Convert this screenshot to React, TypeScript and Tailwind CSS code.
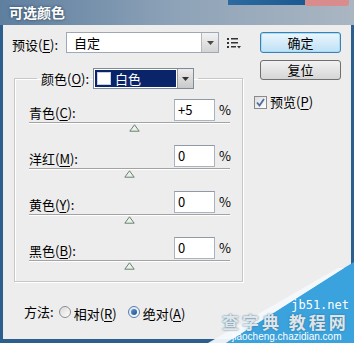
import React from "react";

const font = { fontFamily: '"Noto Sans CJK SC", "Noto Sans", sans-serif' };

function U({ pre, u, post }: { pre: string; u: string; post: string }) {
  return (
    <span className="text-[13px] leading-[18px] whitespace-nowrap">
      {pre}
      <span className="underline underline-offset-2">{u}</span>
      {post}
    </span>
  );
}

function Thumb({ cls }: { cls: string }) {
  return (
    <svg width="11" height="8" viewBox="0 0 11 8" className={cls}>
      <path d="M5.5 0.8 L10.2 7.2 L0.8 7.2 Z" fill="#e8f3e8" stroke="#6f7f72" strokeWidth="1" />
    </svg>
  );
}

function Row({ name, u, value, thumb }: { name: string; u: string; value: string; thumb: string }) {
  return (
    <div className="flex flex-col h-[46px]">
      <div className="flex items-center h-[22px]">
        <div className="w-[145px] pt-[1px]">
          <U pre={name + "("} u={u} post="):" />
        </div>
        <div className="w-[41px] h-[22px] bg-white border border-[#a9b4bf] border-t-[#8f9aa6] text-[13px] leading-[20px] pl-[3px]">
          {value}
        </div>
        <span className="ml-[4px] text-[13px] leading-[18px]">%</span>
      </div>
      <div className="mt-[1px] w-[201px] h-[2px] bg-[#a3a3a3] border-b border-white" />
      <Thumb cls={thumb} />
    </div>
  );
}

export default function App() {
  return (
    <div className="relative w-[354px] h-[343px] overflow-hidden bg-[#2d5f8e] flex flex-col" style={font}>
      {/* title bar */}
      <div className="h-[25px] shrink-0 bg-gradient-to-r from-[#5f7f9f] via-[#8ea3b8] to-[#aab6c2] flex flex-col">
        <div className="flex h-[5px]">
          <div className="w-[228px]" />
          <div className="w-[77px] bg-gradient-to-r from-[#2c6aa0] to-[#1b5a90]" />
          <div className="w-[44px] h-[6px] bg-[#d98c8c] rounded-b-[3px]" />
        </div>
        <div className="pl-[9px] -mt-[2px] text-[14px] leading-[18px] font-bold text-white [text-shadow:0_0_3px_#2a3d52]">
          可选颜色
        </div>
      </div>

      {/* body */}
      <div className="ml-[3px] w-[348px] h-[314px] bg-[#ededed] text-black flex flex-col pl-[9px] pt-[7px]">
        <div className="flex">
          {/* left column */}
          <div className="w-[231px] flex flex-col">
            <div className="flex items-center h-[21px]">
              <div className="w-[54px]">
                <U pre="预设(" u="E" post="):" />
              </div>
              <div className="w-[153px] h-[21px] bg-white border border-[#9fa9b4] flex">
                <div className="flex-1 text-[13px] leading-[19px] pl-[7px]">自定</div>
                <div className="w-[17px] h-[19px] bg-gradient-to-b from-[#f2f2f2] to-[#d4d4d4] border-l border-[#b8b8b8] flex items-center justify-center">
                  <svg width="7" height="4" viewBox="0 0 7 4"><path d="M0 0 H7 L3.5 4 Z" fill="#4a4a4a" /></svg>
                </div>
              </div>
              <svg width="14" height="11" viewBox="0 0 14 11" className="ml-[8px] mt-[2px]">
                <rect x="0" y="0" width="2" height="2" fill="#333" />
                <rect x="4" y="0" width="7" height="1.5" fill="#333" />
                <rect x="0" y="4" width="2" height="2" fill="#333" />
                <rect x="4" y="4" width="7" height="1.5" fill="#333" />
                <rect x="0" y="8" width="2" height="2" fill="#333" />
                <rect x="4" y="8" width="5" height="1.5" fill="#333" />
                <path d="M10 8 H14 L12 10.5 Z" fill="#333" />
              </svg>
            </div>

            {/* group box */}
            <fieldset className="mt-[15px] ml-[2px] w-[229px] h-[214px] border border-[#c7c7c7] shadow-[1px_1px_0_#fff,inset_1px_1px_0_#fff] pb-[2px]">
              <legend className="ml-[22px] px-[4px] flex items-center gap-[4px]">
                <U pre="颜色(" u="O" post="):" />
                <div className="w-[101px] h-[21px] bg-white border border-[#7f8b98] flex">
                  <div className="flex-1 m-[1px] bg-[#0a246a] flex items-center pl-[2px] gap-[4px]">
                    <div className="w-[14px] h-[13px] bg-white border border-[#c8d0e0]" />
                    <span className="text-white text-[13px] leading-[17px]">白色</span>
                  </div>
                  <div className="w-[16px] h-[19px] bg-gradient-to-b from-[#ececec] to-[#c9c9c9] border-l border-[#999] flex items-center justify-center">
                    <svg width="7" height="4" viewBox="0 0 7 4"><path d="M0 0 H7 L3.5 4 Z" fill="#333" /></svg>
                  </div>
                </div>
              </legend>
              <div className="flex flex-col pl-[14px] pt-[10px]">
                <Row name="青色" u="C" value="+5" thumb="ml-[100px]" />
                <Row name="洋红" u="M" value="0" thumb="ml-[95px]" />
                <Row name="黄色" u="Y" value="0" thumb="ml-[95px]" />
                <Row name="黑色" u="B" value="0" thumb="ml-[95px]" />
              </div>
            </fieldset>
          </div>

          {/* right column */}
          <div className="ml-[17px] flex flex-col">
            <div className="w-[81px] h-[21px] rounded-[3px] border border-[#3c7fb1] bg-gradient-to-b from-[#eaf6fd] to-[#bfe1f5] shadow-[inset_0_0_0_1px_#a9dcf5] text-[13px] leading-[19px] text-center">
              确定
            </div>
            <div className="mt-[7px] w-[81px] h-[20px] rounded-[3px] border border-[#707070] bg-gradient-to-b from-[#f2f2f2] to-[#d6d6d6] text-[13px] leading-[18px] text-center">
              复位
            </div>
            <div className="mt-[13px] -ml-[6px] flex items-center gap-[3px]">
              <div className="w-[13px] h-[13px] border border-[#8a8a8a] bg-gradient-to-br from-[#dcdcdc] to-white flex items-center justify-center">
                <svg width="9" height="9" viewBox="0 0 9 9"><path d="M1 4.5 L3.5 7.5 L8 1" fill="none" stroke="#4a6fa5" strokeWidth="1.8" /></svg>
              </div>
              <U pre="预览(" u="P" post=")" />
            </div>
          </div>
        </div>

        {/* method row */}
        <div className="mt-[18px] ml-[12px] flex items-center">
          <span className="text-[13px] leading-[18px]">方法:</span>
          <div className="ml-[5px] w-[12px] h-[12px] rounded-full border border-[#8d8d8d] bg-gradient-to-br from-[#d8d8d8] to-white" />
          <span className="ml-[3px]">
            <U pre="相对(" u="R" post=")" />
          </span>
          <div className="ml-[11px] w-[12px] h-[12px] rounded-full border border-[#5a7ea8] bg-gradient-to-br from-[#d8e4f0] to-white flex items-center justify-center">
            <div className="w-[6px] h-[6px] rounded-full bg-gradient-to-br from-[#5d9bd6] to-[#1f4f8a]" />
          </div>
          <span className="ml-[3px]">
            <U pre="绝对(" u="A" post=")" />
          </span>
        </div>
      </div>

      {/* watermark overlay */}
      <svg width="354" height="343" viewBox="0 0 354 343" className="absolute left-0 top-0 pointer-events-none">
        <path d="M226 343 L344 268 L354 262 L354 343 Z" fill="#3aa2dd" />
        <path d="M208 343 L338 268 L344 268 L226 343 Z" fill="#f4f9fc" opacity="0.95" />
      </svg>
      <div className="absolute right-[5px] top-[298px] text-white text-[12px] leading-[14px]" style={{ fontFamily: '"DejaVu Sans Mono", monospace' }}>
        jb51.net
      </div>
      <div className="absolute left-[222px] top-[313px] text-[17px] leading-[18px] text-[#dfe6ea] font-bold tracking-[3px] [text-shadow:0_0_2px_#3a6a8a]">
        查字典 教程网
      </div>
      <div className="absolute left-[232px] top-[332px] text-white text-[10px] leading-[10px]" style={{ fontFamily: '"Liberation Sans", sans-serif' }}>
        jiaocheng.chazidian.com
      </div>
    </div>
  );
}
